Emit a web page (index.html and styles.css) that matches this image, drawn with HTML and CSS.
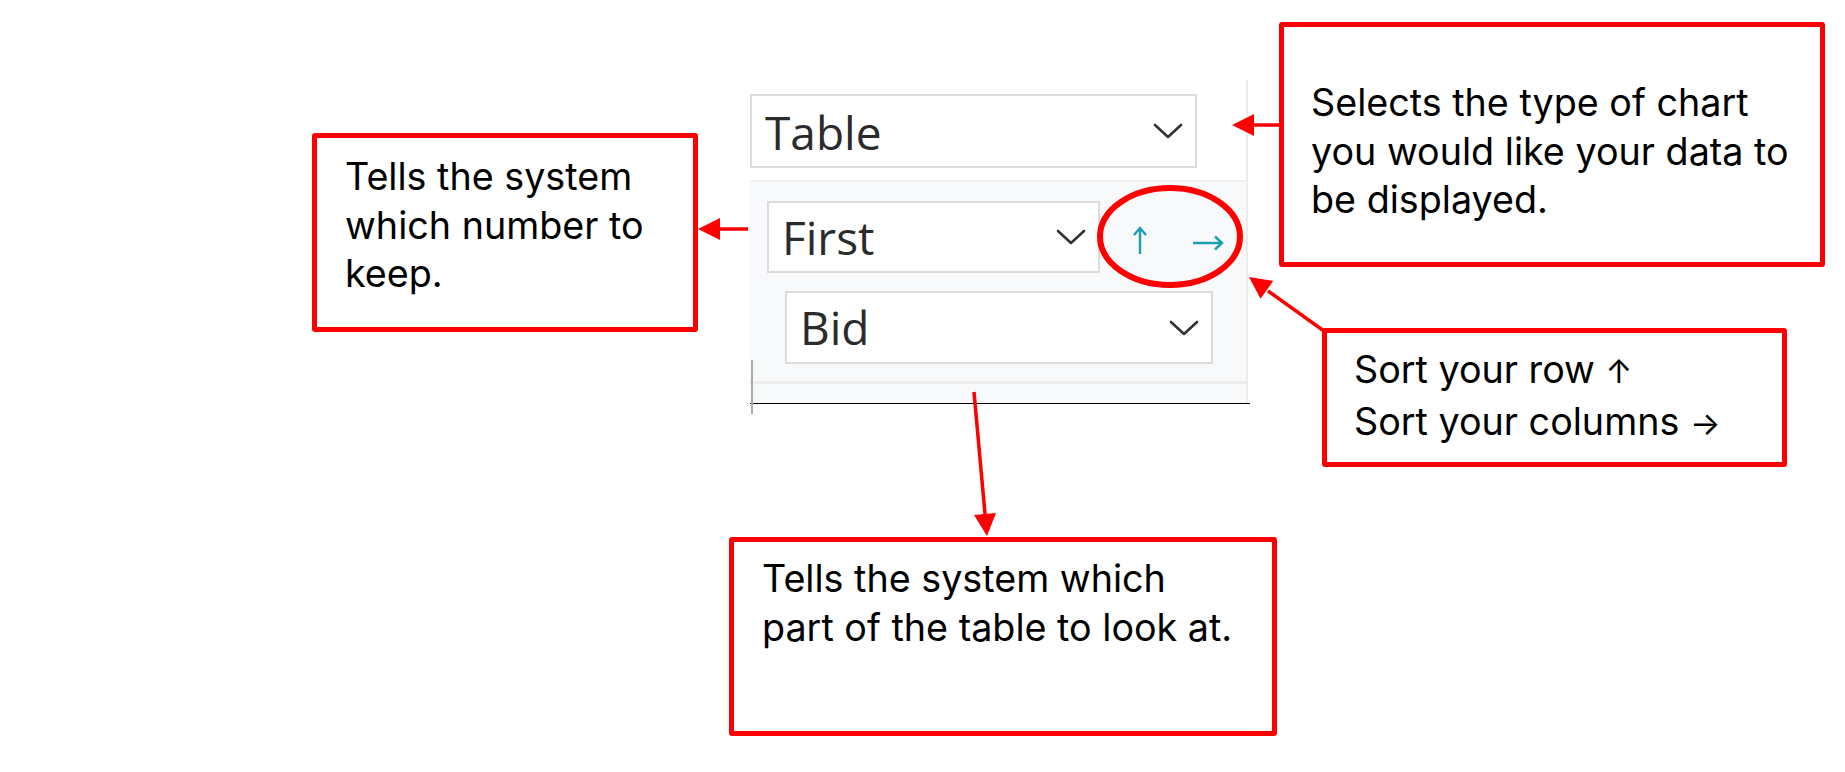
FILE: index.html
```html
<!DOCTYPE html>
<html lang="en">
<head>
<meta charset="utf-8">
<title>Chart settings – annotated</title>
<link rel="stylesheet" href="styles.css">
</head>
<body>
<div class="stage">
  <div class="widget">
    <div class="panel">
      <div class="panel-head">
        <div class="select select-type">
          <span class="select-value">Table</span>
          <svg class="chevron" width="30" height="18" viewBox="0 0 30 18"><path d="M2 3 L15 15 L28 3"/></svg>
        </div>
      </div>
      <div class="panel-body">
        <div class="row row-agg">
          <div class="select select-agg">
            <span class="select-value">First</span>
            <svg class="chevron" width="30" height="18" viewBox="0 0 30 18"><path d="M2 3 L15 15 L28 3"/></svg>
          </div>
          <button class="sort sort-row" type="button" aria-label="Sort rows">
            <svg width="16" height="72" viewBox="0 0 16 72"><path d="M8 27 V53 M2 34 L8 27 L14 34"/></svg>
          </button>
          <button class="sort sort-col" type="button" aria-label="Sort columns">
            <svg width="32" height="72" viewBox="0 0 32 72"><path d="M1 42 H30 M23 35.5 L30 42 L23 48.5"/></svg>
          </button>
        </div>
        <div class="row row-field">
          <div class="select select-field">
            <span class="select-value">Bid</span>
            <svg class="chevron" width="30" height="18" viewBox="0 0 30 18"><path d="M2 3 L15 15 L28 3"/></svg>
          </div>
        </div>
      </div>
      <div class="panel-foot"></div>
    </div>
    <div class="rule"></div>
    <div class="edge"></div>
  </div>

  <svg class="connectors" width="1845" height="772" viewBox="0 0 1845 772">
    <ellipse cx="1170" cy="236.5" rx="70" ry="48.5" class="ring"/>
    <line x1="1279" y1="125" x2="1252" y2="125" class="wire"/>
    <polygon points="1232,125 1254,114 1254,136" class="head"/>
    <line x1="748" y1="229" x2="718" y2="229" class="wire"/>
    <polygon points="698,229 720,218 720,240" class="head"/>
    <line x1="1324" y1="331" x2="1268" y2="291" class="wire"/>
    <polygon points="1249,277 1273.3,280.9 1260.5,298.7" class="head"/>
    <line x1="974" y1="392" x2="985.2" y2="516" class="wire"/>
    <polygon points="987,536 974,515.1 996,513.1" class="head"/>
  </svg>

  <div class="note note-type">Selects the type of chart<br>you would like your data to<br>be displayed.</div>
  <div class="note note-agg">Tells the system<br>which number to<br>keep.</div>
  <div class="note note-sort">Sort your row <span class="glyph">↑</span><br>Sort your columns <span class="glyph">→</span></div>
  <div class="note note-field">Tells the system which<br>part of the table to look at.</div>
</div>
</body>
</html>
```
FILE: styles.css
```css
* { box-sizing: border-box; }

html, body {
  margin: 0;
  padding: 0;
  background: #ffffff;
}

.stage {
  position: relative;
  width: 1845px;
  height: 772px;
  padding: 80px 0 0 750px;
  overflow: hidden;
  font-family: Inter, "Liberation Sans", sans-serif;
}

/* ---------- widget (screenshot) ---------- */
.widget {
  position: relative;
  width: 500px;
}

.panel {
  width: 498px;
  border-right: 2px solid #ececec;
}

.panel-head {
  height: 100px;
  padding-top: 14px;
  background: #ffffff;
}

.panel-body {
  border-top: 2px solid #efefef;
  background: #f8f9fa;
  padding: 19px 0 17px 0;
}

.panel-foot {
  border-top: 3px solid #ececec;
  height: 22px;
  background: #f8f9fa;
}

.rule {
  width: 500px;
  height: 1px;
  background: #000000;
}

.edge {
  position: absolute;
  left: 1px;
  top: 280px;
  width: 2px;
  height: 54px;
  background: #ababab;
}

.select {
  display: flex;
  align-items: center;
  justify-content: space-between;
  background: #ffffff;
  border: 2px solid #dcdcdc;
  padding: 0 12px 0 13px;
  font-family: "Open Sans", "Noto Sans", sans-serif;
  font-size: 46px;
  color: #2b2b2b;
}

.select-value {
  display: block;
  line-height: 70px;
  padding-top: 1px;
}

.chevron path {
  fill: none;
  stroke: #333333;
  stroke-width: 2.6;
  stroke-linecap: round;
  stroke-linejoin: round;
}

.select-type {
  width: 447px;
  height: 74px;
}

.row {
  display: flex;
  align-items: flex-start;
}

.row-agg {
  padding-left: 17px;
  height: 72px;
}

.select-agg {
  width: 333px;
  height: 72px;
}

.select-agg .select-value { line-height: 68px; padding-top: 0; }

.row-field {
  margin-top: 18px;
  padding-left: 35px;
}

.select-field {
  width: 428px;
  height: 73px;
}

.select-field .select-value { line-height: 69px; padding-top: 0; }

.sort {
  display: block;
  border: 0;
  padding: 0;
  margin: 0;
  background: transparent;
}

.sort svg { display: block; }

.sort path {
  fill: none;
  stroke: #1b9fb3;
  stroke-width: 2.4;
  stroke-linecap: butt;
  stroke-linejoin: miter;
}

.sort-row { margin-left: 32px; }
.sort-col { margin-left: 44px; }

/* ---------- annotations ---------- */
.connectors {
  position: absolute;
  left: 0;
  top: 0;
  pointer-events: none;
}

.ring {
  fill: none;
  stroke: #ff0000;
  stroke-width: 6;
}

.wire {
  stroke: #ff0000;
  stroke-width: 3.5;
}

.head {
  fill: #ff0000;
}

.note {
  position: absolute;
  border: 5px solid #ff0000;
  border-radius: 3px;
  background: #ffffff;
  color: #000000;
  font-size: 37.7px;
  line-height: 48.5px;
  white-space: nowrap;
}

.glyph {
  font-size: 32px;
}

.note-type {
  left: 1279px;
  top: 22px;
  width: 546px;
  height: 245px;
  padding: 51px 0 0 27px;
}

.note-agg {
  left: 312px;
  top: 133px;
  width: 386px;
  height: 199px;
  padding: 14px 0 0 28px;
}

.note-sort {
  left: 1322px;
  top: 328px;
  width: 465px;
  height: 139px;
  padding: 12px 0 0 27px;
}

.note-field {
  left: 729px;
  top: 537px;
  width: 548px;
  height: 199px;
  padding: 12px 0 0 28px;
}
```
